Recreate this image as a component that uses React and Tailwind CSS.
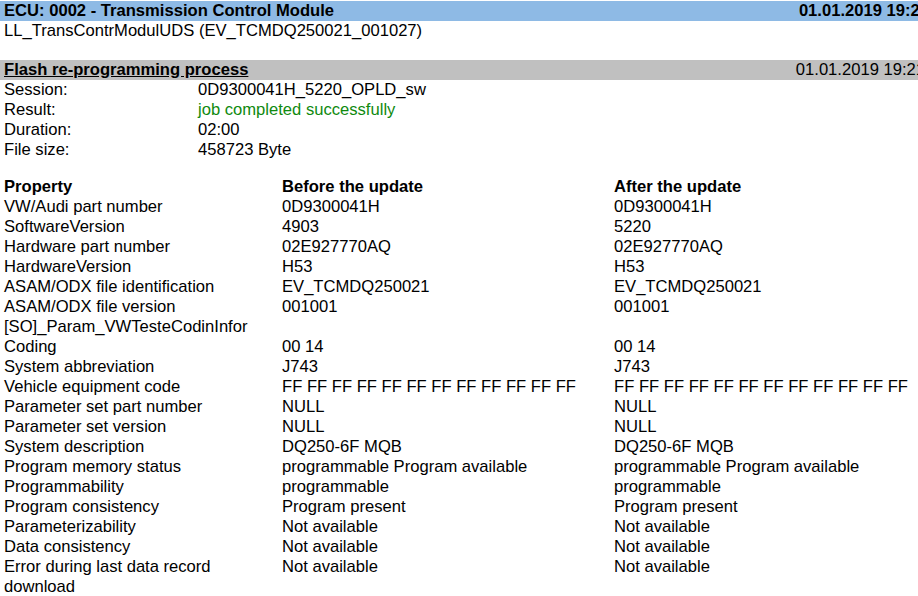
const info = [
  ["Session:", "0D9300041H_5220_OPLD_sw"],
  ["Result:", "job completed successfully", true],
  ["Duration:", "02:00"],
  ["File size:", "458723 Byte"],
];

const rows = [
  ["VW/Audi part number", "0D9300041H", "0D9300041H"],
  ["SoftwareVersion", "4903", "5220"],
  ["Hardware part number", "02E927770AQ", "02E927770AQ"],
  ["HardwareVersion", "H53", "H53"],
  ["ASAM/ODX file identification", "EV_TCMDQ250021", "EV_TCMDQ250021"],
  ["ASAM/ODX file version", "001001", "001001"],
  ["[SO]_Param_VWTesteCodinInfor", "", ""],
  ["Coding", "00 14", "00 14"],
  ["System abbreviation", "J743", "J743"],
  [
    "Vehicle equipment code",
    "FF FF FF FF FF FF FF FF FF FF FF FF",
    "FF FF FF FF FF FF FF FF FF FF FF FF",
  ],
  ["Parameter set part number", "NULL", "NULL"],
  ["Parameter set version", "NULL", "NULL"],
  ["System description", "DQ250-6F MQB", "DQ250-6F MQB"],
  ["Program memory status", "programmable Program available", "programmable Program available"],
  ["Programmability", "programmable", "programmable"],
  ["Program consistency", "Program present", "Program present"],
  ["Parameterizability", "Not available", "Not available"],
  ["Data consistency", "Not available", "Not available"],
  ["Error during last data record download", "Not available", "Not available"],
];

export default function App() {
  return (
    <div className="w-[918px] h-[596px] overflow-hidden bg-white text-black font-['Liberation_Sans',Arial,sans-serif] text-[16.6px] leading-5">
      <div className="w-[934px] pt-px">
        {/* ECU header */}
        <div className="flex justify-between bg-[#8ebae5] pl-1 pr-[5px] font-bold">
          <span>ECU: 0002 - Transmission Control Module</span>
          <span>01.01.2019 19:21</span>
        </div>
        <div className="pl-1">LL_TransContrModulUDS (EV_TCMDQ250021_001027)</div>
        <div className="h-[19px]" />

        {/* Flash process */}
        <div className="flex justify-between bg-[#c0c0c0] pl-1 pr-[9px]">
          <span className="font-bold underline">Flash re-programming process</span>
          <span>01.01.2019 19:21</span>
        </div>
        <div className="grid grid-cols-[194px_1fr] pl-1">
          {info.map(([k, v, ok]) => (
            <div key={k} className="contents">
              <div>{k}</div>
              <div className={ok ? "text-[#0f8a0f]" : ""}>{v}</div>
            </div>
          ))}
        </div>

        {/* Property table */}
        <div className="mt-[17px] grid grid-cols-[278px_332px_1fr]">
          <div className="px-1 font-bold">Property</div>
          <div className="px-1 font-bold">Before the update</div>
          <div className="px-1 font-bold">After the update</div>
          {rows.map(([p, b, a]) => (
            <div key={p} className="contents">
              <div className="px-1">{p}</div>
              <div className="px-1">{b}</div>
              <div className="px-1">{a}</div>
            </div>
          ))}
        </div>
      </div>
    </div>
  );
}
